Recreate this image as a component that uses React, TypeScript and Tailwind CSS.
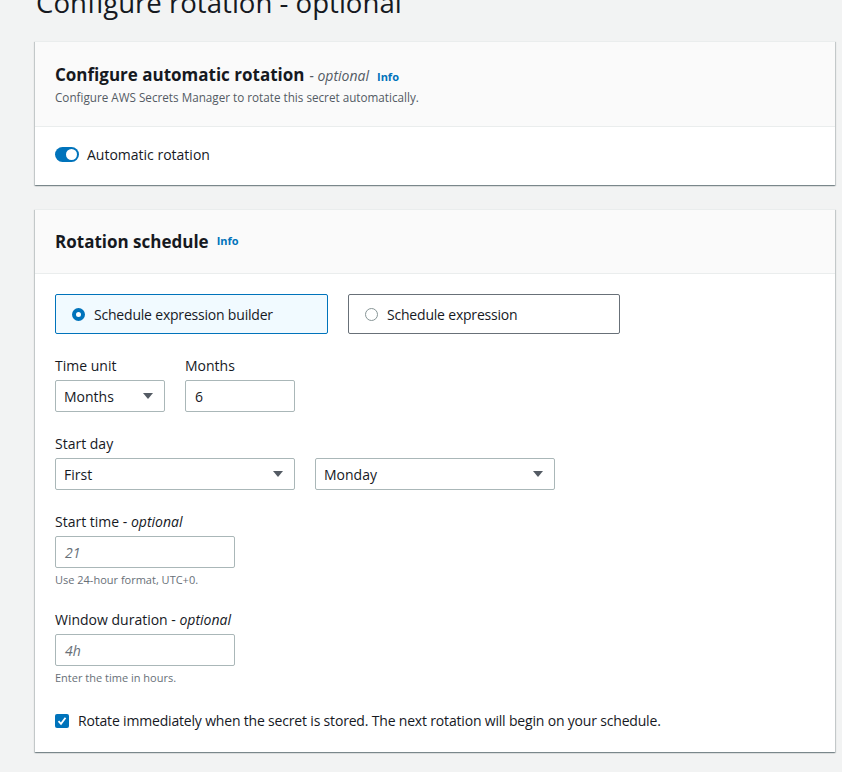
import { ReactNode } from "react";

const font = { fontFamily: '"Open Sans", "Noto Sans", sans-serif' };

function Card({ children, className = "" }: { children: ReactNode; className?: string }) {
  return (
    <div
      className={`w-[800px] bg-white shadow-[0_1px_1px_0_rgba(0,28,36,0.3),1px_1px_1px_0_rgba(0,28,36,0.15),-1px_1px_1px_0_rgba(0,28,36,0.15)] border-t border-[#eaeded] ${className}`}
    >
      {children}
    </div>
  );
}

function Info() {
  return <span className="ml-2 text-[11px] font-bold text-[#0073bb] align-middle">Info</span>;
}

function Caret() {
  return (
    <svg width="12" height="8" viewBox="0 0 12 8" className="shrink-0">
      <path d="M1 1h10L6 7z" fill="#545b64" />
    </svg>
  );
}

function Select({ value, width }: { value: string; width: string }) {
  return (
    <div
      className={`${width} h-[32px] flex items-center justify-between pl-[8px] pr-[10px] border border-[#aab7b8] rounded-[2px] bg-white text-[14px] text-[#16191f]`}
    >
      <span>{value}</span>
      <Caret />
    </div>
  );
}

function Input({ value, width, italic }: { value: string; width: string; italic?: boolean }) {
  return (
    <div
      className={`${width} h-[32px] flex items-center px-[9px] border border-[#aab7b8] rounded-[2px] bg-white text-[14px] ${
        italic ? "italic text-[#687078]" : "text-[#16191f]"
      }`}
    >
      {value}
    </div>
  );
}

function Label({ children }: { children: ReactNode }) {
  return <div className="text-[14px] leading-[22px] text-[#16191f] mb-[3px]">{children}</div>;
}

export default function App() {
  return (
    <div className="min-h-[772px] bg-[#f2f3f3] pl-[35px] overflow-hidden" style={font}>
      <h1 className="text-[27.6px] leading-[36px] text-[#16191f] -mt-[16px] pl-[1px]">
        Configure rotation - optional
      </h1>

      <Card className="mt-[21px]">
        <div className="bg-[#fafafa] border-b border-[#eaeded] px-[20px] pt-[20px] pb-[21px]">
          <div className="flex items-baseline">
            <span className="text-[17px] font-bold text-[#16191f] leading-[26px]">
              Configure automatic rotation
            </span>
            <span className="ml-[5px] text-[14px] italic text-[#545b64]">- optional</span>
            <Info />
          </div>
          <div className="text-[11.7px] text-[#545b64] leading-[16px] mt-[1px]">
            Configure AWS Secrets Manager to rotate this secret automatically.
          </div>
        </div>
        <div className="px-[20px] h-[58px] pb-[4px] flex items-center">
          <div className="relative w-[24px] h-[15px] rounded-full bg-[#0073bb] mr-[8px]">
            <div className="absolute right-[2px] top-[2px] w-[11px] h-[11px] rounded-full bg-white" />
          </div>
          <span className="text-[14px] text-[#16191f]">Automatic rotation</span>
        </div>
      </Card>

      <Card className="mt-[24px]">
        <div className="bg-[#fafafa] border-b border-[#eaeded] px-[20px] h-[64px] flex items-center">
          <span className="text-[17px] font-bold text-[#16191f]">Rotation schedule</span>
          <Info />
        </div>
        <div className="px-[20px] pt-[20px] pb-[21px]">
          <div className="flex gap-[20px]">
            <div className="w-[273px] h-[40px] flex items-center px-[16px] bg-[#f1faff] border border-[#0073bb] rounded-[2px]">
              <div className="w-[13px] h-[13px] rounded-full border-[4px] border-[#0073bb] bg-white mr-[9px]" />
              <span className="text-[14px] text-[#16191f] tracking-[-0.2px]">Schedule expression builder</span>
            </div>
            <div className="w-[272px] h-[40px] flex items-center px-[16px] bg-white border border-[#687078] rounded-[2px]">
              <div className="w-[13px] h-[13px] rounded-full border border-[#879596] bg-white mr-[9px]" />
              <span className="text-[14px] text-[#16191f] tracking-[-0.2px]">Schedule expression</span>
            </div>
          </div>

          <div className="flex gap-[20px] mt-[21px]">
            <div>
              <Label>Time unit</Label>
              <Select value="Months" width="w-[110px]" />
            </div>
            <div>
              <Label>Months</Label>
              <Input value="6" width="w-[110px]" />
            </div>
          </div>

          <div className="mt-[21px]">
            <Label>Start day</Label>
            <div className="flex gap-[20px]">
              <Select value="First" width="w-[240px]" />
              <Select value="Monday" width="w-[240px]" />
            </div>
          </div>

          <div className="mt-[21px]">
            <Label>
              Start time - <i>optional</i>
            </Label>
            <Input value="21" width="w-[180px]" italic />
            <div className="text-[11px] text-[#687078] mt-[4px] leading-[16px]">Use 24-hour format, UTC+0.</div>
          </div>

          <div className="mt-[21px]">
            <Label>
              Window duration - <i>optional</i>
            </Label>
            <Input value="4h" width="w-[180px]" italic />
            <div className="text-[11px] text-[#687078] mt-[4px] leading-[16px]">Enter the time in hours.</div>
          </div>

          <div className="flex items-center mt-[24px]">
            <div className="w-[14px] h-[14px] rounded-[2px] bg-[#0073bb] flex items-center justify-center mr-[9px]">
              <svg width="10" height="10" viewBox="0 0 10 10">
                <path d="M1.5 5.2 4 7.8 8.5 1.8" fill="none" stroke="white" strokeWidth="1.8" />
              </svg>
            </div>
            <span className="text-[14px] text-[#16191f] tracking-[-0.18px]">
              Rotate immediately when the secret is stored. The next rotation will begin on your schedule.
            </span>
          </div>
        </div>
      </Card>
    </div>
  );
}
